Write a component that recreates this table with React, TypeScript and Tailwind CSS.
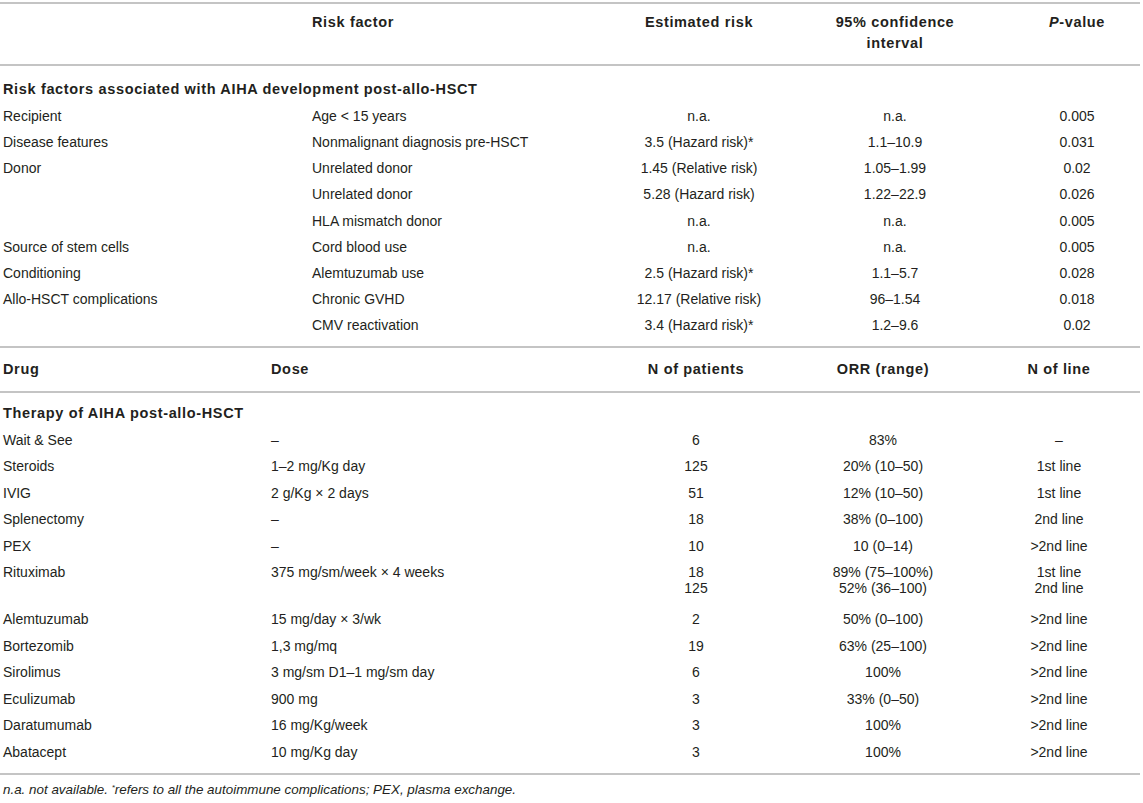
const RISK_ROWS: [string, string, string, string, string][] = [
  ['Recipient', 'Age < 15 years', 'n.a.', 'n.a.', '0.005'],
  ['Disease features', 'Nonmalignant diagnosis pre-HSCT', '3.5 (Hazard risk)*', '1.1–10.9', '0.031'],
  ['Donor', 'Unrelated donor', '1.45 (Relative risk)', '1.05–1.99', '0.02'],
  ['', 'Unrelated donor', '5.28 (Hazard risk)', '1.22–22.9', '0.026'],
  ['', 'HLA mismatch donor', 'n.a.', 'n.a.', '0.005'],
  ['Source of stem cells', 'Cord blood use', 'n.a.', 'n.a.', '0.005'],
  ['Conditioning', 'Alemtuzumab use', '2.5 (Hazard risk)*', '1.1–5.7', '0.028'],
  ['Allo-HSCT complications', 'Chronic GVHD', '12.17 (Relative risk)', '96–1.54', '0.018'],
  ['', 'CMV reactivation', '3.4 (Hazard risk)*', '1.2–9.6', '0.02'],
]

const DRUG_ROWS: [string, string, string[], string[], string[]][] = [
  ['Wait & See', '–', ['6'], ['83%'], ['–']],
  ['Steroids', '1–2 mg/Kg day', ['125'], ['20% (10–50)'], ['1st line']],
  ['IVIG', '2 g/Kg × 2 days', ['51'], ['12% (10–50)'], ['1st line']],
  ['Splenectomy', '–', ['18'], ['38% (0–100)'], ['2nd line']],
  ['PEX', '–', ['10'], ['10 (0–14)'], ['>2nd line']],
  ['Rituximab', '375 mg/sm/week × 4 weeks', ['18', '125'], ['89% (75–100%)', '52% (36–100)'], ['1st line', '2nd line']],
  ['Alemtuzumab', '15 mg/day × 3/wk', ['2'], ['50% (0–100)'], ['>2nd line']],
  ['Bortezomib', '1,3 mg/mq', ['19'], ['63% (25–100)'], ['>2nd line']],
  ['Sirolimus', '3 mg/sm D1–1 mg/sm day', ['6'], ['100%'], ['>2nd line']],
  ['Eculizumab', '900 mg', ['3'], ['33% (0–50)'], ['>2nd line']],
  ['Daratumumab', '16 mg/Kg/week', ['3'], ['100%'], ['>2nd line']],
  ['Abatacept', '10 mg/Kg day', ['3'], ['100%'], ['>2nd line']],
]

function Rule() {
  return <div className="h-[2px] bg-[#c4c4c4]" />
}

export default function App() {
  return (
    <div className="w-[1143px] h-[803px] bg-white text-[14px] text-[#231f20] font-['Liberation_Sans',Arial,sans-serif]">
      <div className="w-[1140px] pt-[2px]">
        <Rule />

        {/* Header risk factors */}
        <div className="grid grid-cols-[312px_288px_198px_194px_148px] h-[60px] pt-[8px] leading-[21px] font-bold text-[14.5px] tracking-[0.65px]">
          <div className="pl-[3px]" />
          <div>Risk factor</div>
          <div className="text-center">Estimated risk</div>
          <div className="text-center">95% confidence<br />interval</div>
          <div className="text-center pl-[22px]"><i>P</i>-value</div>
        </div>
        <Rule />

        <div className="pt-[11px] pb-[7px]">
          <div className="h-[26.2px] flex items-center pl-[3px] font-bold text-[14.5px] tracking-[0.65px]">
            Risk factors associated with AIHA development post-allo-HSCT
          </div>
          {RISK_ROWS.map((r, i) => (
            <div key={i} className="grid grid-cols-[312px_288px_198px_194px_148px] h-[26.2px] items-center">
              <div className="pl-[3px]">{r[0]}</div>
              <div>{r[1]}</div>
              <div className="text-center">{r[2]}</div>
              <div className="text-center">{r[3]}</div>
              <div className="text-center pl-[22px]">{r[4]}</div>
            </div>
          ))}
        </div>
        <Rule />

        {/* Header therapy */}
        <div className="grid grid-cols-[271px_329px_192px_182px_166px] h-[43px] items-center font-bold text-[14.5px] tracking-[0.65px]">
          <div className="pl-[3px]">Drug</div>
          <div>Dose</div>
          <div className="text-center">N of patients</div>
          <div className="text-center">ORR (range)</div>
          <div className="text-center pl-[4px]">N of line</div>
        </div>
        <Rule />

        <div className="pt-[7.5px] pb-[8px]">
          <div className="h-[26.5px] flex items-center pl-[3px] font-bold text-[14.5px] tracking-[0.65px]">
            Therapy of AIHA post-allo-HSCT
          </div>
          {DRUG_ROWS.map((r, i) => {
            const multi = r[2].length > 1
            return (
              <div
                key={i}
                className={
                  multi
                    ? 'grid grid-cols-[271px_329px_192px_182px_166px] h-[47px] pt-[5px] leading-[16px]'
                    : 'grid grid-cols-[271px_329px_192px_182px_166px] h-[26.5px] items-center'
                }
              >
                <div className="pl-[3px]">{r[0]}</div>
                <div>{r[1]}</div>
                <div className="text-center">{r[2].map((v, j) => <div key={j}>{v}</div>)}</div>
                <div className="text-center">{r[3].map((v, j) => <div key={j}>{v}</div>)}</div>
                <div className="text-center pl-[4px]">{r[4].map((v, j) => <div key={j}>{v}</div>)}</div>
              </div>
            )
          })}
        </div>
        <Rule />

        <p className="mt-[6px] pl-[3px] italic text-[13.4px] leading-[18px]">
          n.a. not available. <sup className="text-[8px]">*</sup>refers to all the autoimmune complications; PEX, plasma exchange.
        </p>
      </div>
    </div>
  )
}
